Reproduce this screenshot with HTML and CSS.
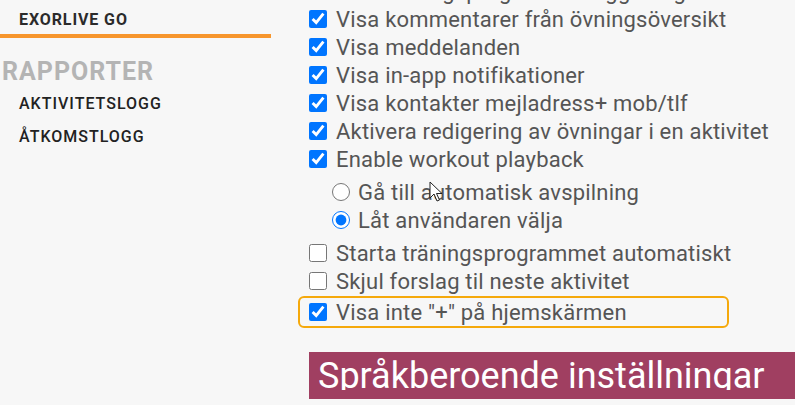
FILE: index.html
```html
<!DOCTYPE html>
<html lang="sv">
<head>
<meta charset="utf-8">
<link rel="stylesheet" href="styles.css">
</head>
<body>
<div class="page">
  <aside class="sidebar">
    <div class="tab">EXORLIVE GO</div>
    <div class="section">RAPPORTER</div>
    <div class="link">AKTIVITETSLOGG</div>
    <div class="link">ÅTKOMSTLOGG</div>
  </aside>
  <main class="main">
    <div class="options">
      <label class="row"><input type="checkbox" checked><span>Visa träningsprogram i utloggat läge</span></label>
      <label class="row"><input type="checkbox" checked><span>Visa kommentarer från övningsöversikt</span></label>
      <label class="row"><input type="checkbox" checked><span>Visa meddelanden</span></label>
      <label class="row"><input type="checkbox" checked><span>Visa in-app notifikationer</span></label>
      <label class="row"><input type="checkbox" checked><span>Visa kontakter mejladress+ mob/tlf</span></label>
      <label class="row"><input type="checkbox" checked><span>Aktivera redigering av övningar i en aktivitet</span></label>
      <label class="row"><input type="checkbox" checked><span>Enable workout playback</span></label>
      <div class="radios">
        <label class="row radio"><input type="radio" name="pb"><span>Gå till automatisk avspilning</span></label>
        <label class="row radio"><input type="radio" name="pb" checked><span>Låt användaren välja</span></label>
      </div>
      <label class="row"><input type="checkbox"><span>Starta träningsprogrammet automatiskt</span></label>
      <label class="row"><input type="checkbox"><span>Skjul forslag til neste aktivitet</span></label>
      <label class="row highlight"><input type="checkbox" checked><span>Visa inte "+" på hjemskärmen</span></label>
    </div>
    <h2 class="heading"><span>Språkberoende inställningar</span></h2>
  </main>
</div>
<svg class="cursor" width="14" height="22" viewBox="0 0 14 22"><path d="M1 1 L1 17 L5 13 L8 20 L10.5 19 L7.5 12.5 L13 12.5 Z" fill="#fff" stroke="#222" stroke-width="1"/></svg>
</body>
</html>
```
FILE: styles.css
```css
html, body {
  margin: 0;
  padding: 0;
  background: #f7f7f7;
  font-family: Roboto, "Liberation Sans", sans-serif;
  overflow: hidden;
}
.page {
  display: flex;
  width: 795px;
  height: 405px;
  position: relative;
}
.sidebar {
  width: 271px;
  flex: none;
}
.tab {
  font-size: 16px;
  font-weight: 700;
  letter-spacing: 0.9px;
  color: #2b2b2b;
  padding: 11px 0 5px 19px;
  line-height: 18px;
  border-bottom: 4px solid #f7962d;
}
.section {
  font-size: 25px;
  font-weight: 700;
  letter-spacing: 1px;
  color: #b4b4b4;
  padding-left: 2px;
  margin-top: 20px;
  line-height: 28px;
}
.link {
  font-size: 16px;
  font-weight: 500;
  letter-spacing: 1px;
  color: #222;
  padding-left: 19px;
  line-height: 33px;
}
.section + .link { margin-top: 1px; }
.main {
  flex: 1;
  padding-left: 38px;
  min-width: 0;
}
.options {
  margin-top: -23px;
}
.row {
  display: flex;
  align-items: center;
  height: 28px;
  font-size: 22px;
  letter-spacing: 0.2px;
  color: #555;
  white-space: nowrap;
}
.row input {
  margin: 0 9px 0 0;
  width: 18px;
  height: 18px;
  accent-color: #0075ff;
  flex: none;
}
.radios {
  padding: 5px 0 5px 23px;
}
.radio input {
  margin-right: 8px;
}
.highlight {
  margin: 1px 0 0 -11px;
  padding-left: 9px;
  width: 418px;
  height: 28px;
  border: 2px solid #f5a90c;
  border-radius: 6px;
}
.heading {
  margin: 24px 0 0 0;
  background: #a03f61;
  height: 47px;
  font-size: 36px;
  font-weight: 400;
  color: #fff;
  padding-left: 9px;
  box-sizing: border-box;
}
.heading span {
  display: block;
  height: 38px;
  line-height: 48px;
  overflow: hidden;
}
.cursor {
  position: absolute;
  left: 429px;
  top: 181px;
}
```
